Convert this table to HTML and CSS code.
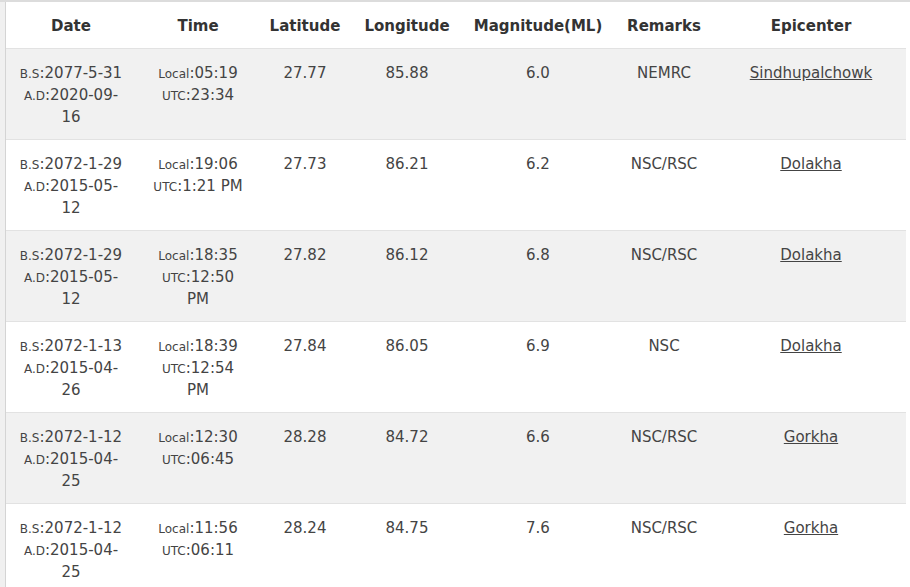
FILE: index.html
```html
<!DOCTYPE html>
<html lang="en">
<head>
<meta charset="utf-8">
<title>Earthquakes</title>
<link rel="stylesheet" href="styles.css">
</head>
<body>
<div class="frame">
  <table class="quakes">
    <colgroup>
      <col class="c-date"><col class="c-time"><col class="c-lat"><col class="c-lon"><col class="c-mag"><col class="c-rem"><col class="c-epi">
    </colgroup>
    <thead>
      <tr><th>Date</th><th>Time</th><th>Latitude</th><th>Longitude</th><th>Magnitude(ML)</th><th>Remarks</th><th>Epicenter</th></tr>
    </thead>
    <tbody>
      <tr>
        <td class="date"><small>B.S</small>:2077-5-31 <small>A.D</small>:2020-09-16</td>
        <td class="time"><small>Local</small>:05:19 <small>UTC</small>:23:34</td>
        <td>27.77</td><td>85.88</td><td>6.0</td><td>NEMRC</td><td><a href="#">Sindhupalchowk</a></td>
      </tr>
      <tr>
        <td class="date"><small>B.S</small>:2072-1-29 <small>A.D</small>:2015-05-12</td>
        <td class="time"><small>Local</small>:19:06 <small>UTC</small>:1:21 PM</td>
        <td>27.73</td><td>86.21</td><td>6.2</td><td>NSC/RSC</td><td><a href="#">Dolakha</a></td>
      </tr>
      <tr>
        <td class="date"><small>B.S</small>:2072-1-29 <small>A.D</small>:2015-05-12</td>
        <td class="time"><small>Local</small>:18:35 <small>UTC</small>:12:50 PM</td>
        <td>27.82</td><td>86.12</td><td>6.8</td><td>NSC/RSC</td><td><a href="#">Dolakha</a></td>
      </tr>
      <tr>
        <td class="date"><small>B.S</small>:2072-1-13 <small>A.D</small>:2015-04-26</td>
        <td class="time"><small>Local</small>:18:39 <small>UTC</small>:12:54 PM</td>
        <td>27.84</td><td>86.05</td><td>6.9</td><td>NSC</td><td><a href="#">Dolakha</a></td>
      </tr>
      <tr>
        <td class="date"><small>B.S</small>:2072-1-12 <small>A.D</small>:2015-04-25</td>
        <td class="time"><small>Local</small>:12:30 <small>UTC</small>:06:45</td>
        <td>28.28</td><td>84.72</td><td>6.6</td><td>NSC/RSC</td><td><a href="#">Gorkha</a></td>
      </tr>
      <tr>
        <td class="date"><small>B.S</small>:2072-1-12 <small>A.D</small>:2015-04-25</td>
        <td class="time"><small>Local</small>:11:56 <small>UTC</small>:06:11</td>
        <td>28.24</td><td>84.75</td><td>7.6</td><td>NSC/RSC</td><td><a href="#">Gorkha</a></td>
      </tr>
    </tbody>
  </table>
</div>
</body>
</html>
```

FILE: styles.css
```css
html, body {
  margin: 0;
  padding: 0;
  background: #f0f0f0;
  font-family: "DejaVu Sans", Verdana, sans-serif;
  color: #444;
  overflow: hidden;
}

body {
  padding-left: 5px;
  border-top: 2px solid #dcdcdc;
}

.frame {
  background: #fff;
  border-left: 1px solid #d4d4d4;
  height: 585px;
}

.quakes {
  width: 900px;
  table-layout: fixed;
  border-collapse: collapse;
  font-size: 15px;
  line-height: 22px;
}

.c-date { width: 130px; }
.c-time { width: 124px; }
.c-lat { width: 90px; }
.c-lon { width: 114px; }
.c-mag { width: 148px; }
.c-rem { width: 104px; }
.c-epi { width: 190px; }

.quakes th {
  font-weight: bold;
  color: #333;
  padding: 13px 2px 11px;
  text-align: center;
  white-space: nowrap;
  background: #fff;
}

.quakes td {
  text-align: center;
  vertical-align: top;
  padding: 13px 12px 11px;
  border-top: 1px solid #e2e2e2;
}

.quakes td.time {
  padding-left: 14px;
  padding-right: 14px;
}

.quakes tbody tr:nth-child(odd) td {
  background: #f1f1f1;
}

.quakes tbody tr:nth-child(even) td {
  background: #fff;
}

.quakes small {
  font-size: 12px;
  line-height: 1;
}

.quakes a {
  color: #444;
  text-decoration: underline;
}
```
